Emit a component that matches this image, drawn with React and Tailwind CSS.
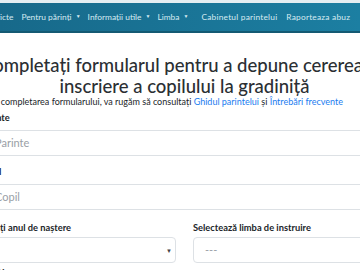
export default function App() {
  const font = { fontFamily: 'Lato, "Noto Sans", sans-serif' };
  return (
    <div className="relative h-[270px] w-[360px] overflow-hidden bg-white text-[#212529]" style={font}>
      <div className="h-[3px] bg-[#e4eef2]" />
      <nav className="flex h-[30px] items-center overflow-hidden whitespace-nowrap border-b-2 border-[#145a73] bg-gradient-to-r from-[#17698a] to-[#1c7fa2] text-[8.4px] text-[#d6ebf2]">
        <span className="-ml-[18px]">Districte</span>
        <span className="ml-[8px] flex items-center gap-[4px]">Pentru părinți <span className="text-[5px]">▼</span></span>
        <span className="ml-[7px] flex items-center gap-[4px]">Informații utile <span className="text-[5px]">▼</span></span>
        <span className="ml-[7px] flex items-center gap-[4px]">Limba <span className="text-[5px]">▼</span></span>
        <span className="ml-[13px] tracking-[0.2px]">Cabinetul parintelui</span>
        <span className="ml-[9px] tracking-[0.2px]">Raporteaza abuz</span>
      </nav>

      <div className="-ml-[20px] w-[409px]">
        <h1 className="mt-[22px] whitespace-nowrap text-center text-[18.5px] font-medium leading-[21px] text-[#2b2f33]">
          Completați formularul pentru a depune cererea de
          <br />
          inscriere a copilului la gradiniță
        </h1>
        <p className="-ml-[8px] -mt-[1px] whitespace-nowrap text-[9px] leading-[12px]">
          Pentru completarea formularului, va rugăm să consultați{' '}
          <a className="text-[#1a7cf0]">Ghidul parintelui</a> și{' '}
          <a className="text-[#1a7cf0]">Întrebări frecvente</a>
        </p>

        <div className="mt-[4px] flex flex-col gap-[6px]">
          <label className="text-[9.3px] font-bold leading-[12px]">Parinte</label>
          <div className="flex h-[26px] items-center rounded border border-[#dde1e5] px-[14px] text-[11px] text-[#9aa0a6]">
            Parinte
          </div>
        </div>

        <div className="mt-[10px] flex flex-col gap-[6px]">
          <label className="text-[9.3px] font-bold leading-[12px]">Copil</label>
          <div className="flex h-[26px] items-center rounded border border-[#dde1e5] px-[14px] text-[11px] text-[#9aa0a6]">
            Copil
          </div>
        </div>

        <div className="mt-[12px] grid grid-cols-2 gap-[17px]">
          <div className="flex flex-col gap-[3px]">
            <label className="-ml-[10px] text-[9.3px] font-bold leading-[12px]">Selectați anul de naștere</label>
            <div className="flex h-[26px] items-center justify-end rounded border border-[#dde1e5] pr-[3px] text-[6px] text-[#444]">
              ▼
            </div>
          </div>
          <div className="flex flex-col gap-[3px]">
            <label className="text-[9.3px] font-bold leading-[12px]">Selectează limba de instruire</label>
            <div className="flex h-[26px] items-center rounded border border-[#dde1e5] px-[11px] text-[11px] text-[#9aa0a6]">
              ---
            </div>
          </div>
        </div>

        <div className="mt-[4px] text-[9.3px] font-bold leading-[12px]">Buletin</div>
      </div>
    </div>
  );
}
